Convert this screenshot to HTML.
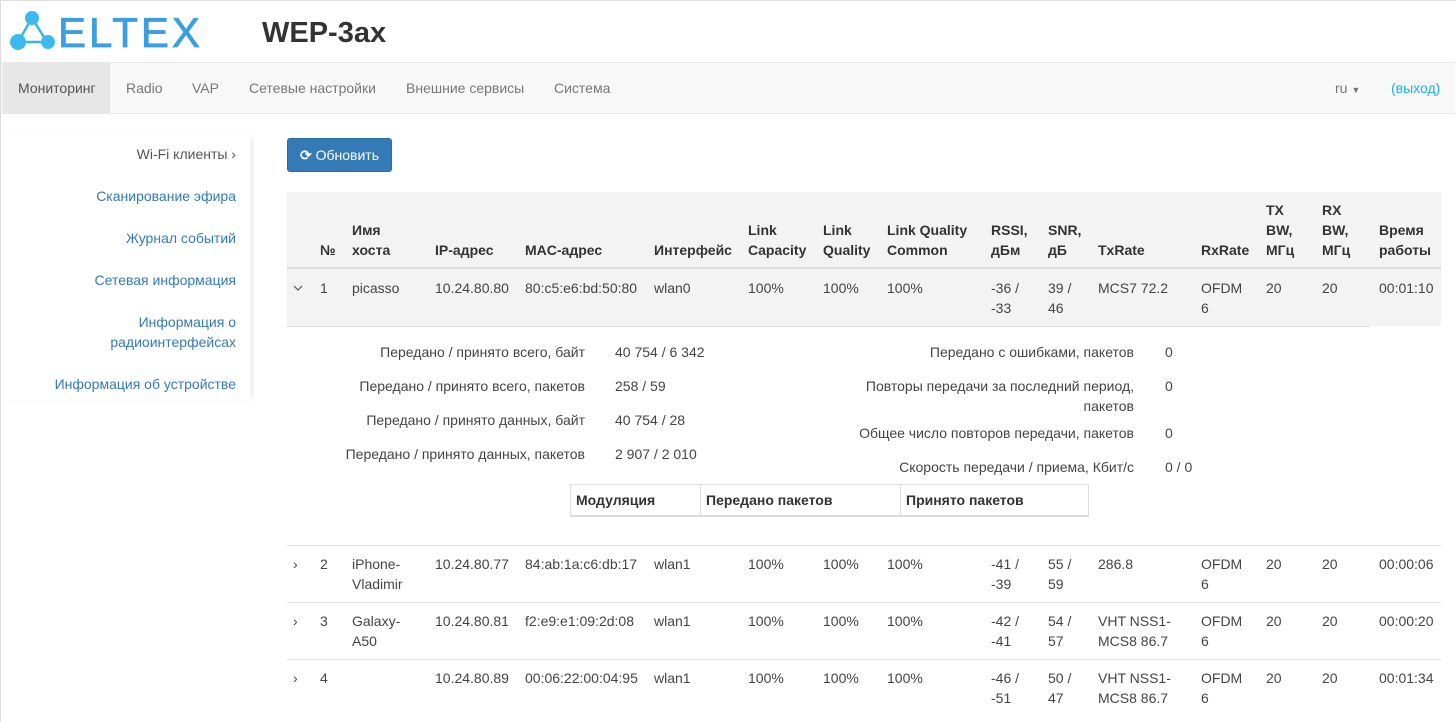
<!DOCTYPE html>
<html><head><meta charset="utf-8"><style>
*{margin:0;padding:0;box-sizing:border-box}
body{width:1456px;height:722px;overflow:hidden;background:#fff;font-family:"Liberation Sans",Arial,sans-serif;font-size:14px;color:#333;position:relative}
.frame{position:absolute;left:0;top:0;width:1456px;height:722px;border-left:1px solid #ddd;border-top:1px solid #ddd}
.t{position:absolute;white-space:nowrap;line-height:20px}
.r{text-align:right}
.b{font-weight:bold}
.g{color:#444}
.a{color:#337ab7}
</style></head><body>
<div class="frame"></div>
<!-- logo -->
<svg style="position:absolute;left:8px;top:8px" width="50" height="46" viewBox="0 0 50 46">
<g stroke="#35b3ea" stroke-width="2.5" fill="none"><line x1="24" y1="10" x2="10" y2="34"/><line x1="24" y1="10" x2="39" y2="34"/><line x1="10" y1="34" x2="39" y2="34"/></g>
<circle cx="24" cy="10" r="7" fill="#3cbaf0"/><circle cx="10" cy="34" r="8" fill="#3cbaf0"/><circle cx="40" cy="34" r="7" fill="#3cbaf0"/>
</svg>
<div class="t" style="left:58px;top:12px;font-size:42px;line-height:42px;color:#3a9ee0;letter-spacing:3px;-webkit-text-stroke:0.8px #3a9ee0">ELTEX</div>
<div class="t b" style="left:262px;top:15px;font-size:29px;line-height:36px;color:#333">WEP-3ax</div>
<!-- navbar -->
<div style="position:absolute;left:1px;top:62px;width:1454px;height:52px;background:#f8f8f8;border-top:1px solid #e7e7e7;border-bottom:1px solid #e7e7e7"></div>
<div style="position:absolute;left:2px;top:63px;width:108px;height:50px;background:#e7e7e7"></div>
<div class="t" style="left:18px;top:78px;color:#555">Мониторинг</div>
<div class="t" style="left:126px;top:78px;color:#777">Radio</div>
<div class="t" style="left:192px;top:78px;color:#777">VAP</div>
<div class="t" style="left:249px;top:78px;color:#777">Сетевые настройки</div>
<div class="t" style="left:406px;top:78px;color:#777">Внешние сервисы</div>
<div class="t" style="left:554px;top:78px;color:#777">Система</div>
<div class="t" style="left:1335px;top:78px;color:#777">ru <span style="font-size:9px">▼</span></div>
<div class="t" style="left:1391px;top:78px;color:#1ab0e8">(выход)</div>
<!-- sidebar -->
<div style="position:absolute;left:0;top:135px;width:251px;height:265px;box-shadow:3px 0 4px -2px rgba(0,0,0,.12)"></div>
<div class="t r" style="right:1220px;top:144px;color:#555">Wi-Fi клиенты ›</div>
<div class="t r a" style="right:1220px;top:186px">Сканирование эфира</div>
<div class="t r a" style="right:1220px;top:228px">Журнал событий</div>
<div class="t r a" style="right:1220px;top:270px">Сетевая информация</div>
<div class="t r a" style="right:1220px;top:312px">Информация о<br>радиоинтерфейсах</div>
<div class="t r a" style="right:1220px;top:374px">Информация об устройстве</div>
<!-- button -->
<div style="position:absolute;left:287px;top:138px;width:105px;height:34px;background:#337ab7;border:1px solid #2e6da4;border-radius:3px;color:#fff;line-height:32px;padding-left:12px;font-size:14px"><b>⟳</b> Обновить</div>
<!-- table header -->
<div style="position:absolute;left:287px;top:192px;width:1154px;height:134px;background:#f3f3f3"></div>
<div style="position:absolute;left:287px;top:267px;width:1154px;height:2px;background:#ddd"></div>
<div style="position:absolute;left:287px;top:326px;width:1083px;height:1px;background:#ddd"></div>
<div class="t b" style="left:320px;top:240px">№</div>
<div class="t b" style="left:352px;top:220px">Имя<br>хоста</div>
<div class="t b" style="left:435px;top:240px">IP-адрес</div>
<div class="t b" style="left:525px;top:240px">MAC-адрес</div>
<div class="t b" style="left:654px;top:240px">Интерфейс</div>
<div class="t b" style="left:748px;top:220px">Link<br>Capacity</div>
<div class="t b" style="left:823px;top:220px">Link<br>Quality</div>
<div class="t b" style="left:887px;top:220px">Link Quality<br>Common</div>
<div class="t b" style="left:991px;top:220px">RSSI,<br>дБм</div>
<div class="t b" style="left:1048px;top:220px">SNR,<br>дБ</div>
<div class="t b" style="left:1098px;top:240px">TxRate</div>
<div class="t b" style="left:1201px;top:240px">RxRate</div>
<div class="t b" style="left:1266px;top:200px">TX<br>BW,<br>МГц</div>
<div class="t b" style="left:1322px;top:200px">RX<br>BW,<br>МГц</div>
<div class="t b" style="left:1379px;top:220px">Время<br>работы</div>
<!-- row 1 -->
<svg style="position:absolute;left:293px;top:285px" width="10" height="6" viewBox="0 0 10 6"><path d="M1 1 L5 5 L9 1" stroke="#555" stroke-width="1.2" fill="none"/></svg>
<div class="t g" style="left:320px;top:278px">1</div>
<div class="t g" style="left:352px;top:278px">picasso</div>
<div class="t g" style="left:435px;top:278px">10.24.80.80</div>
<div class="t g" style="left:525px;top:278px">80:c5:e6:bd:50:80</div>
<div class="t g" style="left:654px;top:278px">wlan0</div>
<div class="t g" style="left:748px;top:278px">100%</div>
<div class="t g" style="left:823px;top:278px">100%</div>
<div class="t g" style="left:887px;top:278px">100%</div>
<div class="t g" style="left:991px;top:278px">-36 /<br>-33</div>
<div class="t g" style="left:1048px;top:278px">39 /<br>46</div>
<div class="t g" style="left:1098px;top:278px">MCS7 72.2</div>
<div class="t g" style="left:1201px;top:278px">OFDM<br>6</div>
<div class="t g" style="left:1266px;top:278px">20</div>
<div class="t g" style="left:1322px;top:278px">20</div>
<div class="t g" style="left:1379px;top:278px">00:01:10</div>
<!-- details -->
<div class="t r g" style="right:871px;top:342px">Передано / принято всего, байт</div>
<div class="t r g" style="right:871px;top:376px">Передано / принято всего, пакетов</div>
<div class="t r g" style="right:871px;top:410px">Передано / принято данных, байт</div>
<div class="t r g" style="right:871px;top:444px">Передано / принято данных, пакетов</div>
<div class="t g" style="left:615px;top:342px">40 754 / 6 342</div>
<div class="t g" style="left:615px;top:376px">258 / 59</div>
<div class="t g" style="left:615px;top:410px">40 754 / 28</div>
<div class="t g" style="left:615px;top:444px">2 907 / 2 010</div>
<div class="t r g" style="right:322px;top:342px">Передано с ошибками, пакетов</div>
<div class="t r g" style="right:322px;top:376px">Повторы передачи за последний период,<br>пакетов</div>
<div class="t r g" style="right:322px;top:423px">Общее число повторов передачи, пакетов</div>
<div class="t r g" style="right:322px;top:457px">Скорость передачи / приема, Кбит/с</div>
<div class="t g" style="left:1165px;top:342px">0</div>
<div class="t g" style="left:1165px;top:376px">0</div>
<div class="t g" style="left:1165px;top:423px">0</div>
<div class="t g" style="left:1165px;top:457px">0 / 0</div>
<div style="position:absolute;left:570px;top:484px;width:519px;height:33px;border:1px solid #ddd;border-bottom-width:2px"></div>
<div style="position:absolute;left:700px;top:484px;width:1px;height:33px;background:#ddd"></div>
<div style="position:absolute;left:900px;top:484px;width:1px;height:33px;background:#ddd"></div>
<div class="t b" style="left:576px;top:490px">Модуляция</div>
<div class="t b" style="left:706px;top:490px">Передано пакетов</div>
<div class="t b" style="left:906px;top:490px">Принято пакетов</div>
<!-- rows 2-4 -->
<div style="position:absolute;left:287px;top:545px;width:1154px;height:1px;background:#ddd"></div>
<div style="position:absolute;left:287px;top:602px;width:1154px;height:1px;background:#ddd"></div>
<div style="position:absolute;left:287px;top:659px;width:1154px;height:1px;background:#ddd"></div>

<div class="t g" style="left:293px;top:554px">›</div>
<div class="t g" style="left:320px;top:554px">2</div>
<div class="t g" style="left:352px;top:554px">iPhone-<br>Vladimir</div>
<div class="t g" style="left:435px;top:554px">10.24.80.77</div>
<div class="t g" style="left:525px;top:554px">84:ab:1a:c6:db:17</div>
<div class="t g" style="left:654px;top:554px">wlan1</div>
<div class="t g" style="left:748px;top:554px">100%</div>
<div class="t g" style="left:823px;top:554px">100%</div>
<div class="t g" style="left:887px;top:554px">100%</div>
<div class="t g" style="left:991px;top:554px">-41 /<br>-39</div>
<div class="t g" style="left:1048px;top:554px">55 /<br>59</div>
<div class="t g" style="left:1098px;top:554px">286.8</div>
<div class="t g" style="left:1201px;top:554px">OFDM<br>6</div>
<div class="t g" style="left:1266px;top:554px">20</div>
<div class="t g" style="left:1322px;top:554px">20</div>
<div class="t g" style="left:1379px;top:554px">00:00:06</div>

<div class="t g" style="left:293px;top:611px">›</div>
<div class="t g" style="left:320px;top:611px">3</div>
<div class="t g" style="left:352px;top:611px">Galaxy-<br>A50</div>
<div class="t g" style="left:435px;top:611px">10.24.80.81</div>
<div class="t g" style="left:525px;top:611px">f2:e9:e1:09:2d:08</div>
<div class="t g" style="left:654px;top:611px">wlan1</div>
<div class="t g" style="left:748px;top:611px">100%</div>
<div class="t g" style="left:823px;top:611px">100%</div>
<div class="t g" style="left:887px;top:611px">100%</div>
<div class="t g" style="left:991px;top:611px">-42 /<br>-41</div>
<div class="t g" style="left:1048px;top:611px">54 /<br>57</div>
<div class="t g" style="left:1098px;top:611px">VHT NSS1-<br>MCS8 86.7</div>
<div class="t g" style="left:1201px;top:611px">OFDM<br>6</div>
<div class="t g" style="left:1266px;top:611px">20</div>
<div class="t g" style="left:1322px;top:611px">20</div>
<div class="t g" style="left:1379px;top:611px">00:00:20</div>

<div class="t g" style="left:293px;top:668px">›</div>
<div class="t g" style="left:320px;top:668px">4</div>
<div class="t g" style="left:435px;top:668px">10.24.80.89</div>
<div class="t g" style="left:525px;top:668px">00:06:22:00:04:95</div>
<div class="t g" style="left:654px;top:668px">wlan1</div>
<div class="t g" style="left:748px;top:668px">100%</div>
<div class="t g" style="left:823px;top:668px">100%</div>
<div class="t g" style="left:887px;top:668px">100%</div>
<div class="t g" style="left:991px;top:668px">-46 /<br>-51</div>
<div class="t g" style="left:1048px;top:668px">50 /<br>47</div>
<div class="t g" style="left:1098px;top:668px">VHT NSS1-<br>MCS8 86.7</div>
<div class="t g" style="left:1201px;top:668px">OFDM<br>6</div>
<div class="t g" style="left:1266px;top:668px">20</div>
<div class="t g" style="left:1322px;top:668px">20</div>
<div class="t g" style="left:1379px;top:668px">00:01:34</div>
</body></html>
